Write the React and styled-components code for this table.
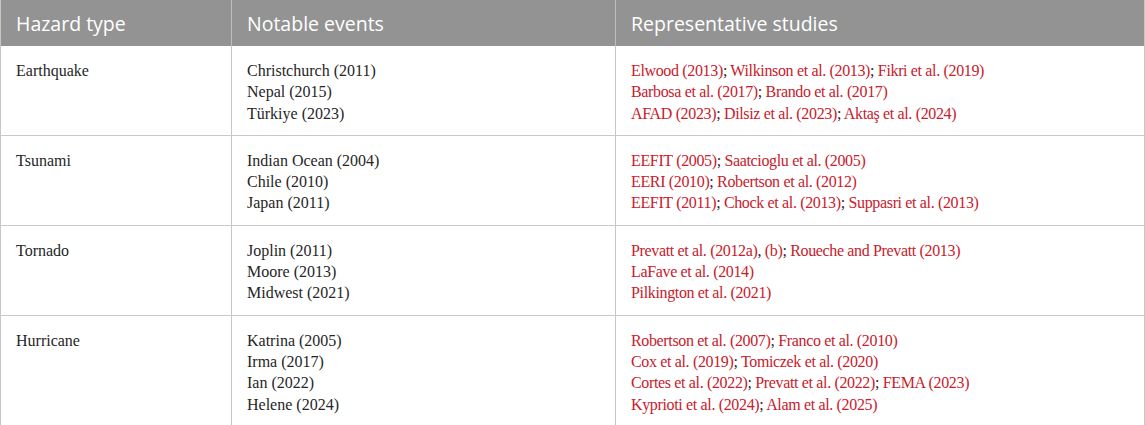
import React from "react";
import styled, { createGlobalStyle } from "styled-components";

const GlobalStyle = createGlobalStyle`
  body {
    margin: 0;
    background: #fff;
  }
`;

const Table = styled.table`
  width: 1144px;
  border-collapse: collapse;
  table-layout: fixed;
  border-left: 1px solid #c6c6c6;
  border-right: 1px solid #c6c6c6;
`;

const HeadCell = styled.th`
  height: 45px;
  padding: 1px 15px 0;
  background: #939393;
  color: #fff;
  font-family: "Open Sans", "Noto Sans", sans-serif;
  font-size: 19.5px;
  font-weight: 400;
  text-align: left;
  border-left: 1px solid #bdbdbd;
  &:first-child {
    border-left: none;
  }
`;

const Row = styled.tr`
  border-bottom: 1px solid #c8c8c8;
`;

const Cell = styled.td`
  vertical-align: top;
  padding: 14px 15px 11px;
  font-family: "Liberation Serif", "Times New Roman", serif;
  font-size: 16px;
  line-height: 21.3px;
  color: #262626;
  letter-spacing: ${({ tight }) => (tight ? "-0.35px" : "0")};
  border-left: 1px solid #c6c6c6;
  &:first-child {
    border-left: none;
  }
`;

const Line = styled.div`
  white-space: nowrap;
`;

const Ref = styled.span`
  color: #c8202c;
`;

// each line of the studies column: refs split by "; " (and "(b)" after a comma)
const rows = [
  {
    hazard: "Earthquake",
    events: ["Christchurch (2011)", "Nepal (2015)", "Türkiye (2023)"],
    studies: [
      ["Elwood (2013)", "Wilkinson et al. (2013)", "Fikri et al. (2019)"],
      ["Barbosa et al. (2017)", "Brando et al. (2017)"],
      ["AFAD (2023)", "Dilsiz et al. (2023)", "Aktaş et al. (2024)"],
    ],
  },
  {
    hazard: "Tsunami",
    events: ["Indian Ocean (2004)", "Chile (2010)", "Japan (2011)"],
    studies: [
      ["EEFIT (2005)", "Saatcioglu et al. (2005)"],
      ["EERI (2010)", "Robertson et al. (2012)"],
      ["EEFIT (2011)", "Chock et al. (2013)", "Suppasri et al. (2013)"],
    ],
  },
  {
    hazard: "Tornado",
    events: ["Joplin (2011)", "Moore (2013)", "Midwest (2021)"],
    studies: [
      [["Prevatt et al. (2012a)", "(b)"], "Roueche and Prevatt (2013)"],
      ["LaFave et al. (2014)"],
      ["Pilkington et al. (2021)"],
    ],
  },
  {
    hazard: "Hurricane",
    events: ["Katrina (2005)", "Irma (2017)", "Ian (2022)", "Helene (2024)"],
    studies: [
      ["Robertson et al. (2007)", "Franco et al. (2010)"],
      ["Cox et al. (2019)", "Tomiczek et al. (2020)"],
      ["Cortes et al. (2022)", "Prevatt et al. (2022)", "FEMA (2023)"],
      ["Kyprioti et al. (2024)", "Alam et al. (2025)"],
    ],
  },
];

const StudyLine = ({ refs }) => (
  <Line>
    {refs.map((r, i) => (
      <React.Fragment key={i}>
        {i > 0 && "; "}
        {Array.isArray(r) ? (
          <>
            <Ref>{r[0]}</Ref>, <Ref>{r[1]}</Ref>
          </>
        ) : (
          <Ref>{r}</Ref>
        )}
      </React.Fragment>
    ))}
  </Line>
);

const App = () => (
  <>
    <GlobalStyle />
    <Table>
      <colgroup>
        <col style={{ width: 231 }} />
        <col style={{ width: 384 }} />
        <col style={{ width: 529 }} />
      </colgroup>
      <thead>
        <tr>
          <HeadCell>Hazard type</HeadCell>
          <HeadCell>Notable events</HeadCell>
          <HeadCell>Representative studies</HeadCell>
        </tr>
      </thead>
      <tbody>
        {rows.map((row) => (
          <Row key={row.hazard}>
            <Cell>{row.hazard}</Cell>
            <Cell>
              {row.events.map((e) => (
                <Line key={e}>{e}</Line>
              ))}
            </Cell>
            <Cell tight>
              {row.studies.map((refs, i) => (
                <StudyLine key={i} refs={refs} />
              ))}
            </Cell>
          </Row>
        ))}
      </tbody>
    </Table>
  </>
);

export default App;
